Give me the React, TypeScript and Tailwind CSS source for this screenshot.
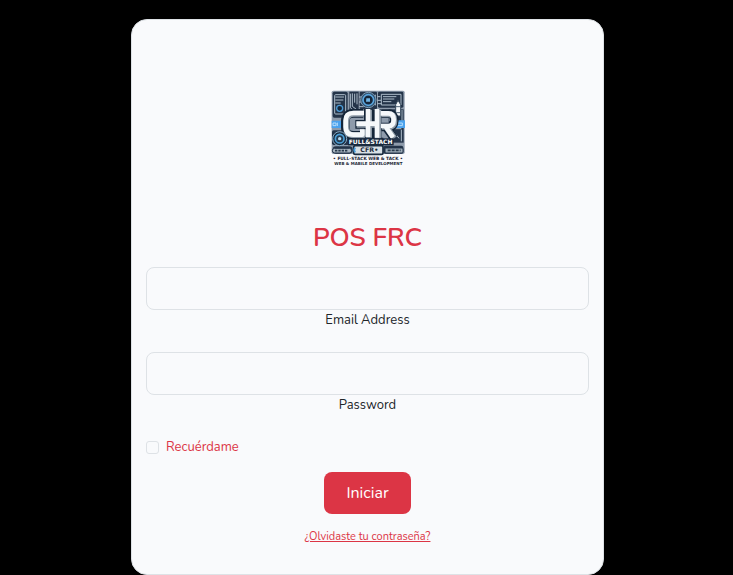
import React from "react";

function Logo() {
  return (
    <svg viewBox="15 17 222 228" className="h-[76px] w-[74px]" role="img" aria-label="CFR Full-Stack">
      <rect x="17" y="19" width="219" height="190" rx="5" fill="#8e9bab" />
      {/* circuit board backdrop */}
      <g fill="#243449">
        <rect x="20" y="22" width="45" height="78" rx="5" />
        <rect x="70" y="22" width="28" height="60" />
        <rect x="101" y="22" width="52" height="52" rx="3" />
        <rect x="156" y="22" width="76" height="48" rx="4" />
        <rect x="18" y="138" width="52" height="44" rx="5" />
        <rect x="188" y="75" width="45" height="100" />
        <rect x="20" y="186" width="60" height="22" rx="10" />
        <rect x="84" y="160" width="88" height="25" />
        <rect x="172" y="184" width="60" height="24" rx="6" />
      </g>
      <g fill="none" stroke="#aebdcb" strokeWidth="3">
        <rect x="26" y="31" width="33" height="58" rx="3" />
        <path d="M28 38h26M28 47h24M28 56h16M73 28v42l11 10M79 27v39l12 9M86 28v27M93 27v33M99 38h8M99 53h9M99 67h14M148 31v32M154 37h9M154 48h11M154 58h13" />
        <path d="M166 30h59v32h-59zM171 37h40M171 44h34M171 52h25" />
        <path d="M73 85h26M75 92h15M192 82v28M200 77v19M228 77v34M202 140l17 22M195 148v18M226 136v35M204 133h22" />
        <path d="M22 194h52M26 202h45M177 193h50M179 201h46" />
      </g>
      <circle cx="127" cy="47" r="23" fill="#31506c" stroke="#7d9cb6" strokeWidth="3" />
      <circle cx="127" cy="47" r="16" fill="#15263a" stroke="#5aa5dd" strokeWidth="5" />
      <path d="M121 42h11v10h-12z" fill="#6fb5e5" />
      <circle cx="41" cy="72" r="9" fill="#142538" stroke="#4c9bd7" strokeWidth="4" />
      <path d="M216 48l-7 13v34h15V61z" fill="#f4f7f9" stroke="#34475a" strokeWidth="3" />
      <path d="M210 67h13M211 85h12" stroke="#52677b" strokeWidth="3" />
      <path d="M17 109h36v22H17zM200 108h37v23h-37z" fill="#4ba2ed" />
      <path d="M21 116h9v8h-9zM34 115v10M215 116h14v8h-14" fill="none" stroke="#b7defc" strokeWidth="3" />
      {/* interlocked CFR letters */}
      <g fill="none" strokeLinejoin="round">
        <g stroke="#142538" strokeWidth="26">
          <path d="M112 87H82Q58 87 58 111v18q0 24 24 24h28" />
          <path d="M127 74v87M88 120h68M153 75v87" />
          <path d="M166 88h22q17 0 17 20t-17 20h-22M180 128l24 34" />
        </g>
        <g stroke="#8d9aa6" strokeWidth="18">
          <path d="M112 88H84Q61 88 61 111v18q0 24 23 24h27v-18" />
          <path d="M129 76v84M92 121h64M156 76v86" />
          <path d="M166 90h22q17 0 17 19t-17 18h-20M181 128l24 34" />
        </g>
        <g stroke="#f5f8fa" strokeWidth="14">
          <path d="M114 86H82Q59 86 59 109v19q0 23 23 23h27v-16" />
          <path d="M126 74v84M91 118h63M153 74v86" />
          <path d="M164 87h23q16 0 16 19t-16 19h-22M178 125l23 34" />
        </g>
      </g>
      <circle cx="41" cy="163" r="21" fill="#172a3e" stroke="#8aaec9" strokeWidth="3" />
      <circle cx="41" cy="163" r="13" fill="#263d53" stroke="#4b9fd8" strokeWidth="5" />
      <circle cx="41" cy="163" r="5" fill="#b6d8ee" />
      <rect x="66" y="162" width="137" height="21" fill="#18283c" />
      <text x="68" y="179" fill="#ffffff" fontFamily="DejaVu Sans, sans-serif" fontWeight="700" fontSize="18">FULL&amp;STACH</text>
      <rect x="83" y="184" width="88" height="26" rx="5" fill="#d8e0e6" stroke="#1b2c40" strokeWidth="5" />
      <path d="M88 190q-7 7 0 14" fill="none" stroke="#479cda" strokeWidth="5" />
      <text x="103" y="204" fill="#1b2939" fontFamily="DejaVu Sans, sans-serif" fontWeight="700" fontSize="19">CFR•</text>
      <rect x="19" y="192" width="58" height="14" rx="7" fill="#a6b3bf" stroke="#203147" strokeWidth="3" />
      <path d="M27 199h40" stroke="#26384b" strokeWidth="5" strokeDasharray="7 3" />
      <rect x="177" y="191" width="54" height="15" rx="3" fill="#9dacb8" stroke="#203147" strokeWidth="3" />
      <path d="M185 198h39" stroke="#26384b" strokeWidth="5" strokeDasharray="9 3" />
      <g fill="#1d2736" fontFamily="DejaVu Sans, sans-serif" fontWeight="700" textAnchor="middle">
        <text x="126" y="227" fontSize="13">• FULL-STACK WEB &amp; TACK •</text>
        <text x="127" y="242" fontSize="12">WEB &amp; MABILE DEVELOPMENT</text>
      </g>
    </svg>
  );
}

function Field({ id, label, type }: { id: string; label: string; type: string }) {
  return (
    <div className="mb-[22px] flex w-full flex-col items-center">
      <input
        id={id}
        type={type}
        className="h-[43px] w-full rounded-lg border border-[#dee2e6] bg-transparent px-3 text-base outline-none focus:border-[#dc3545]"
      />
      <label htmlFor={id} className="text-[13px] leading-5 text-[#212529]">{label}</label>
    </div>
  );
}

export default function App() {
  return (
    <main className="min-h-screen bg-black pt-[19px] pr-[129px] pl-[131px] font-[Nunito,Lato,sans-serif]">
      <form
        onSubmit={(event) => event.preventDefault()}
        className="mx-auto flex w-full max-w-[473px] flex-col items-center rounded-2xl border border-[#dee2e6] bg-[#f9fafc] px-[14px] pt-[70px] pb-[29px]"
      >
        <Logo />
        <h1 className="mt-[55px] mb-3 text-[26px] leading-[34px] font-semibold text-[#dc3545]">POS FRC</h1>
        <Field id="email" label="Email Address" type="email" />
        <Field id="password" label="Password" type="password" />
        <div className="flex items-center gap-[7px] self-start">
          <input
            id="remember"
            type="checkbox"
            className="size-[13px] appearance-none rounded-[3px] border border-[#dee2e6] bg-transparent checked:bg-[#dc3545]"
          />
          <label htmlFor="remember" className="text-[13px] leading-5 text-[#dc3545]">Recuérdame</label>
        </div>
        <button type="submit" className="mt-[15px] h-[42px] rounded-lg bg-[#dc3545] px-[22px] text-base text-white">
          Iniciar
        </button>
        <a href="#recuperar" className="mt-[15px] text-[11px] leading-4 text-[#dc3545] underline">¿Olvidaste tu contraseña?</a>
      </form>
    </main>
  );
}
